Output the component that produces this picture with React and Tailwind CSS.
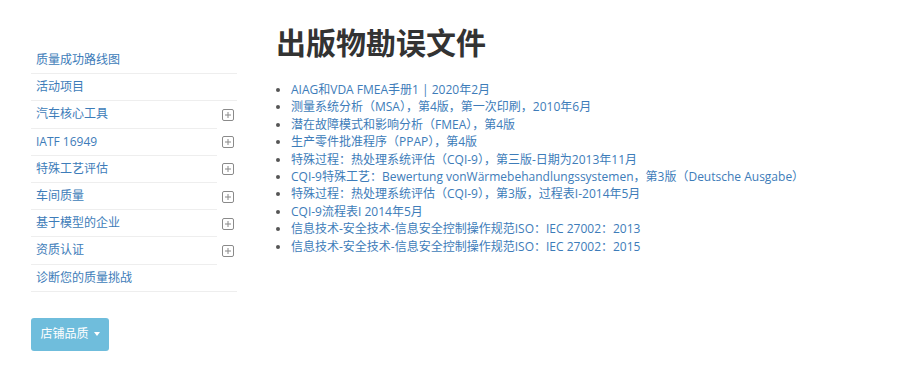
import React from 'react';

const menu = [
    { name: '质量成功路线图', sub: false },
    { name: '活动项目', sub: false },
    { name: '汽车核心工具', sub: true },
    { name: 'IATF 16949', sub: true },
    { name: '特殊工艺评估', sub: true },
    { name: '车间质量', sub: true },
    { name: '基于模型的企业', sub: true },
    { name: '资质认证', sub: true },
    { name: '诊断您的质量挑战', sub: false },
];

const docs = [
    'AIAG和VDA FMEA手册1 | 2020年2月',
    '测量系统分析（MSA），第4版，第一次印刷，2010年6月',
    '潜在故障模式和影响分析（FMEA），第4版',
    '生产零件批准程序（PPAP），第4版',
    '特殊过程：热处理系统评估（CQI-9），第三版-日期为2013年11月',
    'CQI-9特殊工艺：Bewertung vonWärmebehandlungssystemen，第3版（Deutsche Ausgabe）',
    '特殊过程：热处理系统评估（CQI-9），第3版，过程表I-2014年5月',
    'CQI-9流程表I 2014年5月',
    '信息技术-安全技术-信息安全控制操作规范ISO：IEC 27002：2013',
    '信息技术-安全技术-信息安全控制操作规范ISO：IEC 27002：2015',
];

const PlusBox = () => (
    <svg width="12" height="12" viewBox="0 0 12 12" className="shrink-0">
        <rect x="0.5" y="0.5" width="11" height="11" rx="1.5" fill="none" stroke="#8a8a8a" strokeWidth="1" />
        <path d="M6 3v6M3 6h6" stroke="#8a8a8a" strokeWidth="1" />
    </svg>
);

const SideMenu = () => (
    <div className="w-[206px] shrink-0 pt-[47px]">
        <ul>
            {menu.map((item) => (
                <li key={item.name} className="flex items-center">
                    <a className="flex-1 h-[27.2px] flex items-center pl-[5px] border-b border-[#eeeeee] text-[12px] text-[#3d7cb9]">
                        {item.name}
                    </a>
                    {item.sub && (
                        <span className="w-[20px] flex items-center h-[27.2px] pl-[5px]">
                            <PlusBox />
                        </span>
                    )}
                </li>
            ))}
        </ul>
        <button className="mt-[26px] h-[33px] w-[78px] rounded-[3px] bg-[#6fbddc] text-white text-[12px] flex items-center justify-center gap-[5px]">
            店铺品质
            <span className="w-0 h-0 border-l-[3.5px] border-r-[3.5px] border-t-[4px] border-l-transparent border-r-transparent border-t-white" />
        </button>
    </div>
);

const App = () => {
    return (
        <div
            className="w-[900px] h-[376px] bg-white flex gap-[39px] pl-[31px]"
            style={{ fontFamily: '"Open Sans", "Noto Sans CJK SC", sans-serif' }}
        >
            <SideMenu />
            <div className="pt-[26px]">
                <h1 className="text-[30px] font-bold leading-[34px] text-[#333333]">出版物勘误文件</h1>
                <ul className="mt-[21px] list-disc pl-[15px] text-[12px] leading-[17.4px] text-[#3d7cb9] marker:text-[#555555]">
                    {docs.map((doc) => (
                        <li key={doc}>
                            <a>{doc}</a>
                        </li>
                    ))}
                </ul>
            </div>
        </div>
    );
};

export default App;
